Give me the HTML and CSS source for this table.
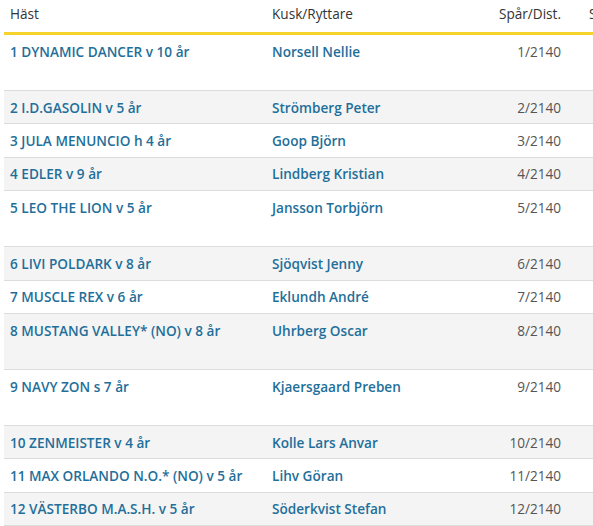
FILE: index.html
```html
<!DOCTYPE html>
<html lang="sv">
<head>
<meta charset="utf-8">
<link rel="stylesheet" href="styles.css">
</head>
<body>
<div class="wrap">
<table class="starts">
  <colgroup>
    <col class="c-horse"><col class="c-driver"><col class="c-dist"><col class="c-more">
  </colgroup>
  <thead>
    <tr><th>Häst</th><th>Kusk/Ryttare</th><th class="num">Spår/Dist.</th><th>Skor</th></tr>
  </thead>
  <tbody>
    <tr class="tall"><td><a>1 DYNAMIC DANCER v 10 år</a></td><td><a>Norsell Nellie</a></td><td class="num">1/2140</td><td></td></tr>
    <tr><td><a>2 I.D.GASOLIN v 5 år</a></td><td><a>Strömberg Peter</a></td><td class="num">2/2140</td><td></td></tr>
    <tr><td><a>3 JULA MENUNCIO h 4 år</a></td><td><a>Goop Björn</a></td><td class="num">3/2140</td><td></td></tr>
    <tr><td><a>4 EDLER v 9 år</a></td><td><a>Lindberg Kristian</a></td><td class="num">4/2140</td><td></td></tr>
    <tr class="tall"><td><a>5 LEO THE LION v 5 år</a></td><td><a>Jansson Torbjörn</a></td><td class="num">5/2140</td><td></td></tr>
    <tr><td><a>6 LIVI POLDARK v 8 år</a></td><td><a>Sjöqvist Jenny</a></td><td class="num">6/2140</td><td></td></tr>
    <tr><td><a>7 MUSCLE REX v 6 år</a></td><td><a>Eklundh André</a></td><td class="num">7/2140</td><td></td></tr>
    <tr class="tall"><td><a>8 MUSTANG VALLEY* (NO) v 8 år</a></td><td><a>Uhrberg Oscar</a></td><td class="num">8/2140</td><td></td></tr>
    <tr class="tall"><td><a>9 NAVY ZON s 7 år</a></td><td><a>Kjaersgaard Preben</a></td><td class="num">9/2140</td><td></td></tr>
    <tr><td><a>10 ZENMEISTER v 4 år</a></td><td><a>Kolle Lars Anvar</a></td><td class="num">10/2140</td><td></td></tr>
    <tr><td><a>11 MAX ORLANDO N.O.* (NO) v 5 år</a></td><td><a>Lihv Göran</a></td><td class="num">11/2140</td><td></td></tr>
    <tr><td><a>12 VÄSTERBO M.A.S.H. v 5 år</a></td><td><a>Söderkvist Stefan</a></td><td class="num">12/2140</td><td></td></tr>
  </tbody>
</table>
</div>
</body>
</html>
```
FILE: styles.css
```css
html, body {
  margin: 0;
  padding: 0;
  background: #fff;
  overflow: hidden;
}
.wrap {
  padding-left: 4px;
  width: 760px;
}
.starts {
  border-collapse: collapse;
  table-layout: fixed;
  width: 756px;
  font-family: "Open Sans", "Liberation Sans", sans-serif;
  font-size: 13.6px;
  color: #555;
}
.c-horse { width: 262px; }
.c-driver { width: 200px; }
.c-dist { width: 111px; }
.c-more { width: 183px; }
.starts th {
  text-align: left;
  font-weight: 400;
  color: #333;
  padding: 5px 6px 10px;
  line-height: 17px;
  border-bottom: 3px solid #f6d32d;
  white-space: nowrap;
}
.starts th:last-child { padding-left: 12px; }
.starts td {
  padding: 8.5px 6px 7.5px;
  line-height: 16.4px;
  vertical-align: top;
  border-bottom: 1px solid #dcdcdc;
  white-space: nowrap;
}
.starts .num {
  text-align: right;
  padding-right: 16px;
}
.starts tbody tr:nth-child(even) td { background: #f4f4f4; }
.starts tr.tall td { padding-bottom: 30.1px; }
.starts a {
  color: #1f6f9a;
  font-weight: 600;
  text-decoration: none;
}
```
